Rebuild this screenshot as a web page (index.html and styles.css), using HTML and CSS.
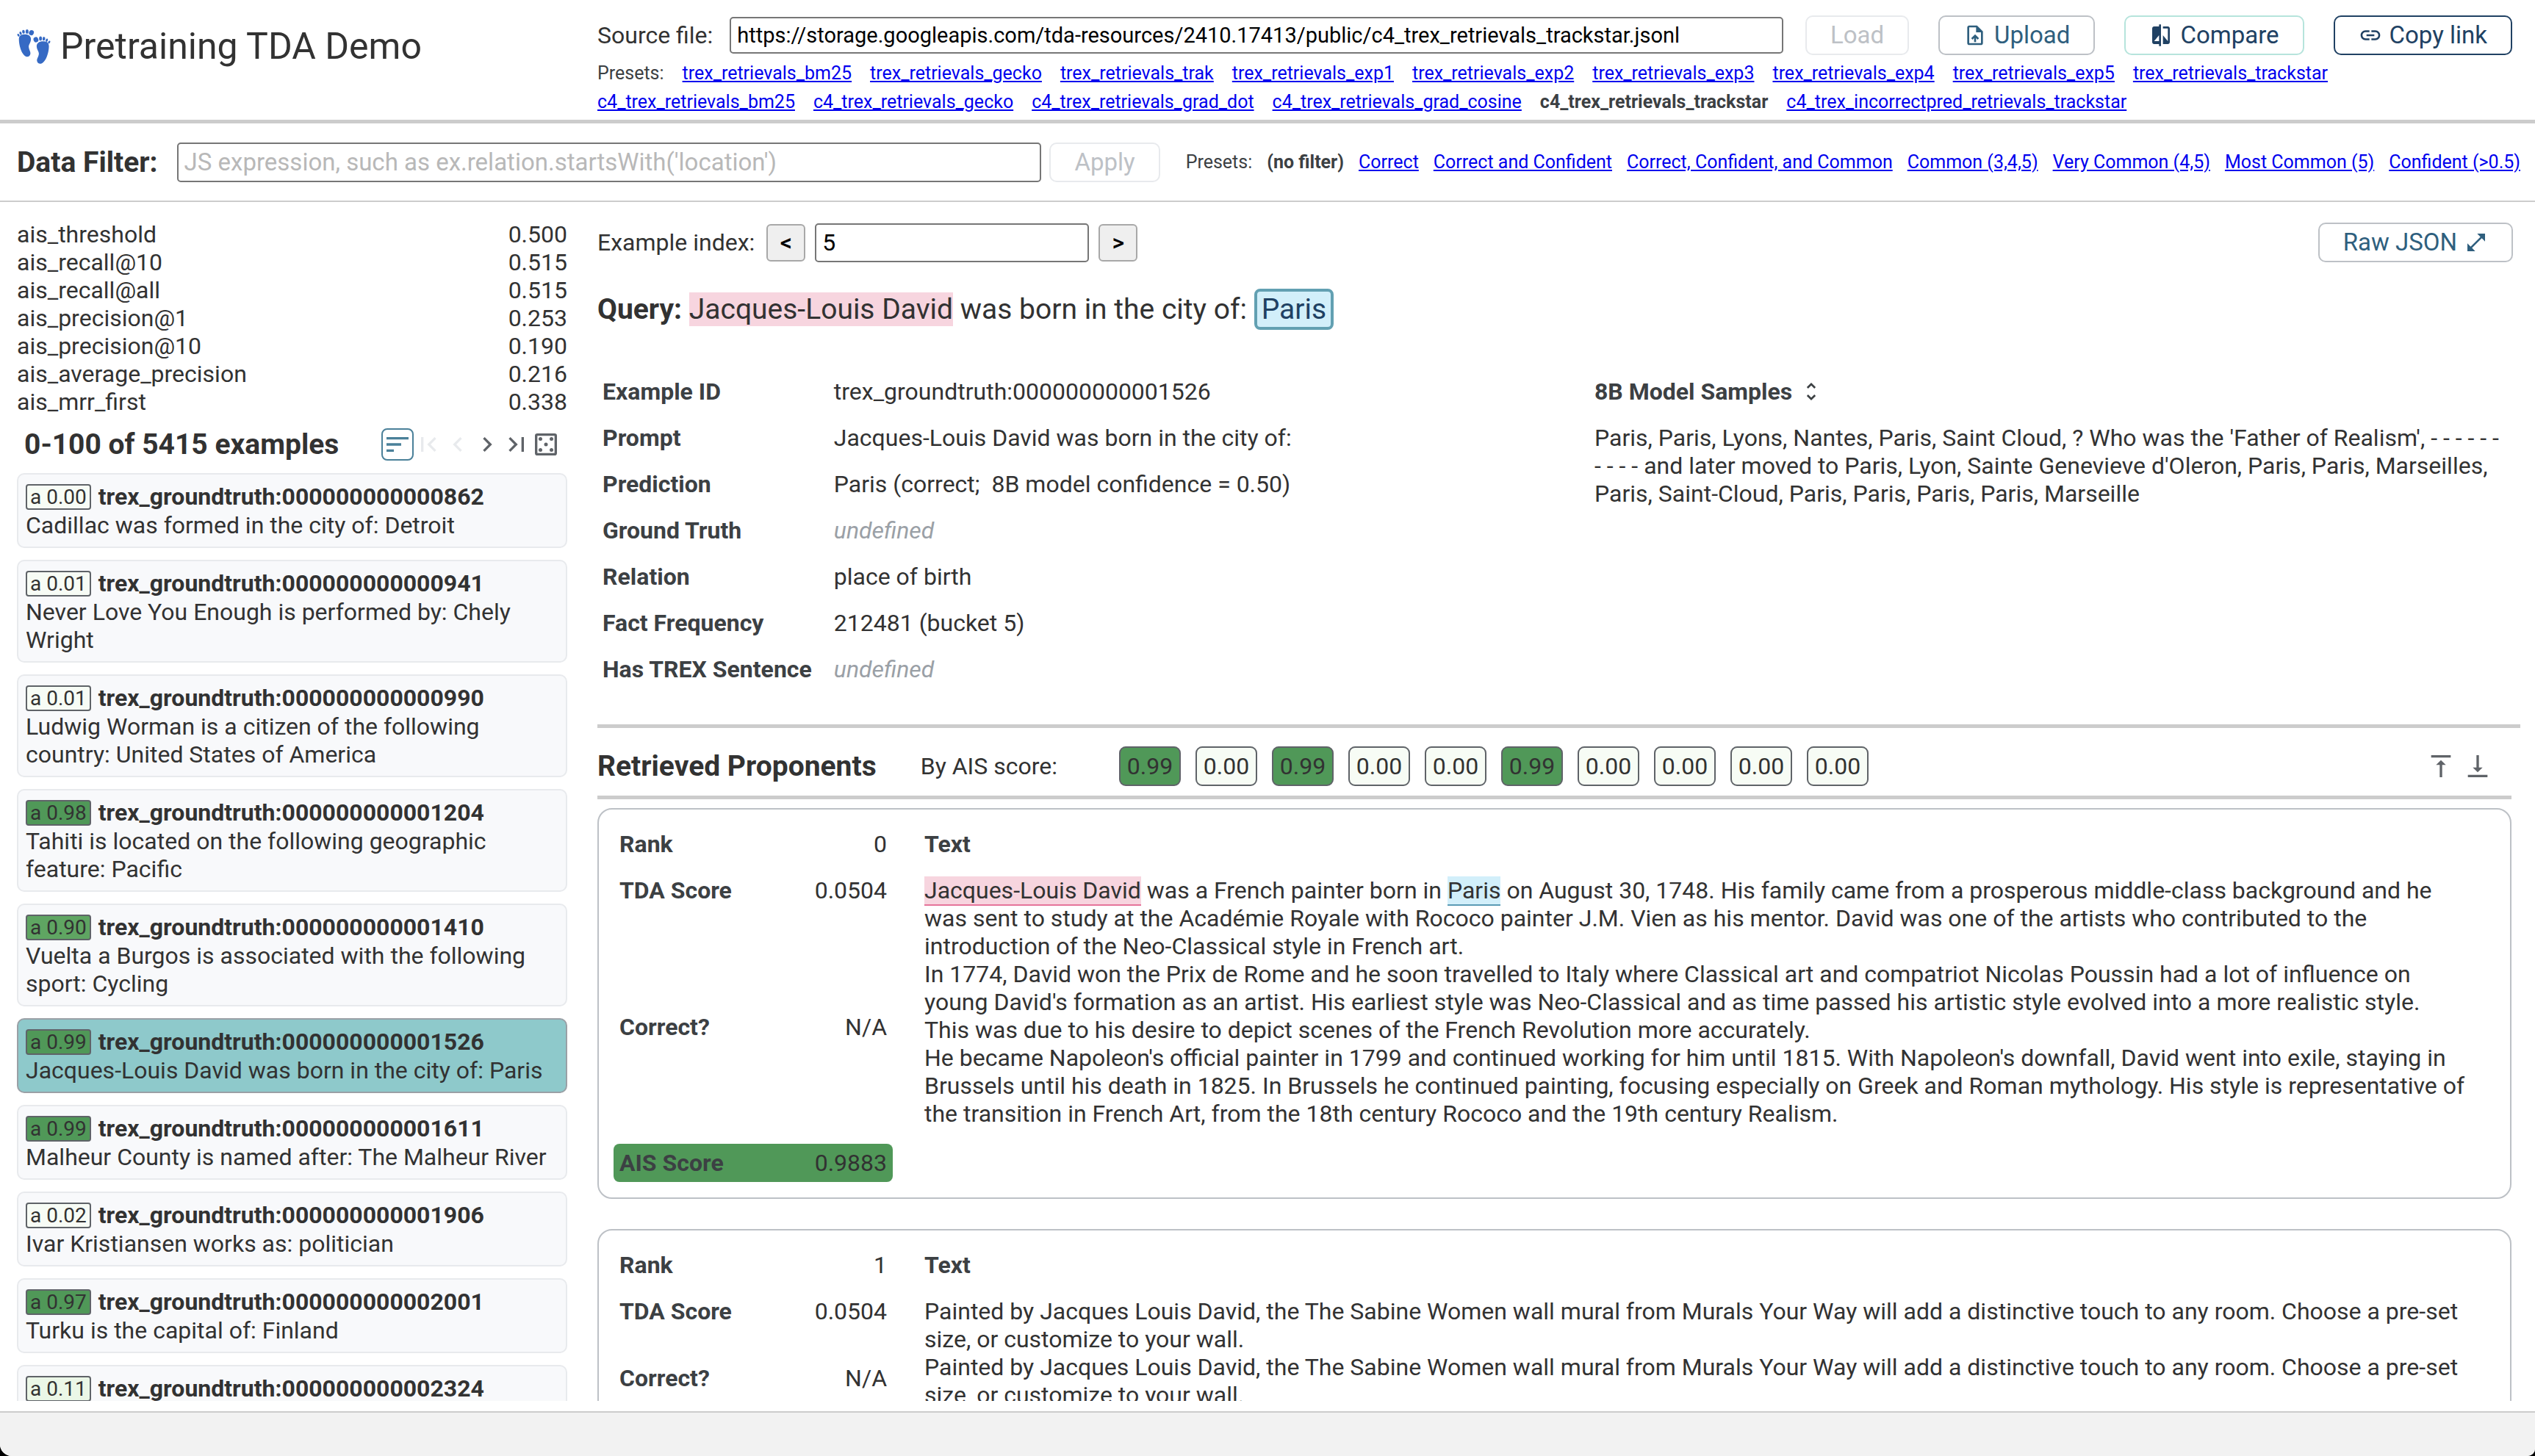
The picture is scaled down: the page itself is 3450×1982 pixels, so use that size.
FILE: index.html
```html
<!DOCTYPE html>
<html lang="en">
<head>
<meta charset="utf-8">
<title>Pretraining TDA Demo</title>
<link rel="stylesheet" href="styles.css">
</head>
<body>
<div class="app">
  <header class="header">
    <div class="brand">
      <svg class="brand-icon" viewBox="44 54 140 150" fill="#366ac4" aria-hidden="true">
        <path d="M52 98C52 84 61 78 76 78C94 78 103 86 102 100C101 114 92 120 93 131C94 141 101 150 100 158C99 167 92 172 84 171C66 168 52 128 52 98Z"/>
        <ellipse cx="104" cy="71" rx="10" ry="11" transform="rotate(25 104 71)"/>
        <ellipse cx="86" cy="66" rx="6" ry="9"/>
        <ellipse cx="71" cy="67" rx="5.500" ry="8" transform="rotate(-8 71 67)"/>
        <ellipse cx="59" cy="73" rx="4.500" ry="7" transform="rotate(-20 59 73)"/>
        <ellipse cx="50" cy="81" rx="4" ry="6" transform="rotate(-30 50 81)"/>
        <path d="M177 127C177 113 168 107 153 107C135 107 125 115 126 129C127 143 136 149 135 160C134 170 126 179 127 187C128 196 135 201 144 200C162 197 177 157 177 127Z"/>
        <ellipse cx="123" cy="100" rx="10" ry="11" transform="rotate(-25 123 100)"/>
        <ellipse cx="142" cy="95" rx="6" ry="9"/>
        <ellipse cx="156" cy="96" rx="5.500" ry="8" transform="rotate(8 156 96)"/>
        <ellipse cx="168" cy="102" rx="4.500" ry="7" transform="rotate(20 168 102)"/>
        <ellipse cx="178" cy="110" rx="4" ry="6" transform="rotate(30 178 110)"/>
      </svg>
      <h1 class="brand-title">Pretraining TDA Demo</h1>
    </div>
    <div class="source">
      <div class="source-row">
        <label class="source-label" for="source">Source file:</label>
        <input class="text-input source-input" id="source" type="text" value="https://storage.googleapis.com/tda-resources/2410.17413/public/c4_trex_retrievals_trackstar.jsonl">
        <div class="source-actions">
          <button class="btn" type="button" disabled>Load</button>
          <button class="btn" type="button"><svg class="icon" viewBox="0 0 24 24" aria-hidden="true"><path d="M14 2H6c-1.100 0-1.990.9-1.990 2L4 20c0 1.100.890 2 1.990 2H18c1.100 0 2-.9 2-2V8l-6-6zm4 18H6V4h7v5h5v11zM8 15.010l1.410 1.410L11 14.840V19h2v-4.160l1.590 1.590L16 15.010 12.010 11z"/></svg>Upload</button>
          <button class="btn btn-mint" type="button"><svg class="icon" viewBox="0 0 24 24" aria-hidden="true"><path d="M10 3H5c-1.100 0-2 .9-2 2v14c0 1.100.9 2 2 2h5v2h2V1h-2v2zm0 15H5l5-6v6zm9-15h-5v2h5v13l-5-6v9h5c1.100 0 2-.9 2-2V5c0-1.100-.9-2-2-2z"/></svg>Compare</button>
          <button class="btn btn-navy" type="button"><svg class="icon" viewBox="0 0 24 24" aria-hidden="true"><path d="M3.900 12c0-1.710 1.390-3.100 3.100-3.100h4V7H7c-2.760 0-5 2.240-5 5s2.240 5 5 5h4v-1.900H7c-1.710 0-3.100-1.390-3.100-3.100zM8 13h8v-2H8v2zm9-6h-4v1.900h4c1.710 0 3.100 1.390 3.100 3.100s-1.390 3.100-3.100 3.100h-4V17h4c2.760 0 5-2.240 5-5s-2.240-5-5-5z"/></svg>Copy link</button>
        </div>
      </div>
      <nav class="presets source-presets">
        <span>Presets:</span>
        <a href="#">trex_retrievals_bm25</a>
        <a href="#">trex_retrievals_gecko</a>
        <a href="#">trex_retrievals_trak</a>
        <a href="#">trex_retrievals_exp1</a>
        <a href="#">trex_retrievals_exp2</a>
        <a href="#">trex_retrievals_exp3</a>
        <a href="#">trex_retrievals_exp4</a>
        <a href="#">trex_retrievals_exp5</a>
        <a href="#">trex_retrievals_trackstar</a>
        <a href="#">c4_trex_retrievals_bm25</a>
        <a href="#">c4_trex_retrievals_gecko</a>
        <a href="#">c4_trex_retrievals_grad_dot</a>
        <a href="#">c4_trex_retrievals_grad_cosine</a>
        <b>c4_trex_retrievals_trackstar</b>
        <a href="#">c4_trex_incorrectpred_retrievals_trackstar</a>
      </nav>
    </div>
  </header>

  <div class="filter">
    <label class="filter-label" for="filter">Data Filter:</label>
    <input class="text-input filter-input" id="filter" type="text" placeholder="JS expression, such as ex.relation.startsWith('location')">
    <button class="btn filter-apply" type="button" disabled>Apply</button>
    <nav class="presets filter-presets">
      <span>Presets:</span>
      <b>(no filter)</b>
      <a href="#">Correct</a>
      <a href="#">Correct and Confident</a>
      <a href="#">Correct, Confident, and Common</a>
      <a href="#">Common (3,4,5)</a>
      <a href="#">Very Common (4,5)</a>
      <a href="#">Most Common (5)</a>
      <a href="#">Confident (&gt;0.5)</a>
    </nav>
  </div>

  <main class="main">
    <aside class="sidebar">
      <table class="metrics">
        <tr><th scope="row">ais_threshold</th><td>0.500</td></tr>
        <tr><th scope="row">ais_recall@10</th><td>0.515</td></tr>
        <tr><th scope="row">ais_recall@all</th><td>0.515</td></tr>
        <tr><th scope="row">ais_precision@1</th><td>0.253</td></tr>
        <tr><th scope="row">ais_precision@10</th><td>0.190</td></tr>
        <tr><th scope="row">ais_average_precision</th><td>0.216</td></tr>
        <tr><th scope="row">ais_mrr_first</th><td>0.338</td></tr>
      </table>
      <div class="list-head">
        <h2 class="list-title">0-100 of 5415 examples</h2>
        <div class="pager">
          <button class="icon-btn icon-btn-on" type="button" aria-label="Sort"><svg viewBox="0 0 24 24"><path d="M3 18h6v-2H3v2zM3 6v2h18V6H3zm0 7h12v-2H3v2z"/></svg></button>
          <button class="icon-btn" type="button" aria-label="First page" disabled><svg viewBox="0 0 24 24"><path d="M18.410 16.590L13.820 12l4.590-4.590L17 6l-6 6 6 6zM6 6h2v12H6z"/></svg></button>
          <button class="icon-btn" type="button" aria-label="Previous page" disabled><svg viewBox="0 0 24 24"><path d="M15.410 7.410L14 6l-6 6 6 6 1.410-1.410L10.830 12z"/></svg></button>
          <button class="icon-btn" type="button" aria-label="Next page"><svg viewBox="0 0 24 24"><path d="M10 6L8.590 7.410 13.170 12l-4.580 4.590L10 18l6-6z"/></svg></button>
          <button class="icon-btn" type="button" aria-label="Last page"><svg viewBox="0 0 24 24"><path d="M5.590 7.410L10.180 12l-4.590 4.590L7 18l6-6-6-6zM16 6h2v12h-2z"/></svg></button>
          <button class="icon-btn" type="button" aria-label="Random example"><svg viewBox="0 0 24 24"><path fill-rule="evenodd" d="M5 3h14a2 2 0 0 1 2 2v14a2 2 0 0 1-2 2H5a2 2 0 0 1-2-2V5a2 2 0 0 1 2-2zm0 2v14h14V5z"/><circle cx="7.500" cy="7.500" r="1.500"/><circle cx="16.500" cy="7.500" r="1.500"/><circle cx="12" cy="12" r="1.500"/><circle cx="7.500" cy="16.500" r="1.500"/><circle cx="16.500" cy="16.500" r="1.500"/></svg></button>
        </div>
      </div>
      <ul class="examples">
        <li class="example"><div class="example-head"><span class="score score-low">a 0.00</span><b>trex_groundtruth:000000000000862</b></div>Cadillac was formed in the city of: Detroit</li>
        <li class="example"><div class="example-head"><span class="score score-low">a 0.01</span><b>trex_groundtruth:000000000000941</b></div>Never Love You Enough is performed by: Chely Wright</li>
        <li class="example"><div class="example-head"><span class="score score-low">a 0.01</span><b>trex_groundtruth:000000000000990</b></div>Ludwig Worman is a citizen of the following country: United States of America</li>
        <li class="example"><div class="example-head"><span class="score score-high">a 0.98</span><b>trex_groundtruth:000000000001204</b></div>Tahiti is located on the following geographic feature: Pacific</li>
        <li class="example"><div class="example-head"><span class="score score-good">a 0.90</span><b>trex_groundtruth:000000000001410</b></div>Vuelta a Burgos is associated with the following sport: Cycling</li>
        <li class="example example-on"><div class="example-head"><span class="score score-high">a 0.99</span><b>trex_groundtruth:000000000001526</b></div>Jacques-Louis David was born in the city of: Paris</li>
        <li class="example"><div class="example-head"><span class="score score-high">a 0.99</span><b>trex_groundtruth:000000000001611</b></div>Malheur County is named after: The Malheur River</li>
        <li class="example"><div class="example-head"><span class="score score-low">a 0.02</span><b>trex_groundtruth:000000000001906</b></div>Ivar Kristiansen works as: politician</li>
        <li class="example"><div class="example-head"><span class="score score-high">a 0.97</span><b>trex_groundtruth:000000000002001</b></div>Turku is the capital of: Finland</li>
        <li class="example example-last"><div class="example-head"><span class="score score-faint">a 0.11</span><b>trex_groundtruth:000000000002324</b></div></li>
      </ul>
    </aside>

    <section class="detail">
      <div class="index-row">
        <label class="index-label" for="index">Example index:</label>
        <button class="step" type="button">&lt;</button>
        <input class="text-input index-input" id="index" type="text" value="5">
        <button class="step" type="button">&gt;</button>
        <button class="btn raw" type="button">Raw JSON<svg class="icon" viewBox="0 0 24 24" aria-hidden="true"><path d="M21 11V3h-8l3.290 3.290-10 10L3 13v8h8l-3.290-3.290 10-10z"/></svg></button>
      </div>
      <p class="query"><b>Query:</b> <span class="subject">Jacques-Louis David</span> was born in the city of: <span class="answer">Paris</span></p>
      <div class="info">
        <table class="fields">
          <tr><th scope="row">Example ID</th><td>trex_groundtruth:000000000001526</td></tr>
          <tr><th scope="row">Prompt</th><td>Jacques-Louis David was born in the city of:</td></tr>
          <tr><th scope="row">Prediction</th><td>Paris (correct;&nbsp; 8B model confidence = 0.50)</td></tr>
          <tr><th scope="row">Ground Truth</th><td><i>undefined</i></td></tr>
          <tr><th scope="row">Relation</th><td>place of birth</td></tr>
          <tr><th scope="row">Fact Frequency</th><td>212481 (bucket 5)</td></tr>
          <tr><th scope="row">Has TREX Sentence</th><td><i>undefined</i></td></tr>
        </table>
        <div class="samples">
          <h3 class="samples-title">8B Model Samples<svg class="icon" viewBox="0 0 24 24" aria-hidden="true"><path d="M12 5.830L15.170 9l1.410-1.410L12 3 7.410 7.590 8.830 9 12 5.830zm0 12.340L8.830 15l-1.410 1.410L12 21l4.590-4.590L15.170 15 12 18.170z"/></svg></h3>
          <p class="samples-text">Paris, Paris, Lyons, Nantes, Paris, Saint Cloud, ? Who was the 'Father of Realism', - - - - - -<br>- - - - and later moved to Paris, Lyon, Sainte Genevieve d'Oleron, Paris, Paris, Marseilles, Paris, Saint-Cloud, Paris, Paris, Paris, Paris, Marseille</p>
        </div>
      </div>
      <div class="proponents">
        <div class="prop-head">
          <h2 class="prop-title">Retrieved Proponents</h2>
          <span class="prop-by">By AIS score:</span>
          <div class="chips">
            <button class="chip score-high" type="button">0.99</button>
            <button class="chip score-low" type="button">0.00</button>
            <button class="chip score-high" type="button">0.99</button>
            <button class="chip score-low" type="button">0.00</button>
            <button class="chip score-low" type="button">0.00</button>
            <button class="chip score-high" type="button">0.99</button>
            <button class="chip score-low" type="button">0.00</button>
            <button class="chip score-low" type="button">0.00</button>
            <button class="chip score-low" type="button">0.00</button>
            <button class="chip score-low" type="button">0.00</button>
          </div>
          <div class="prop-tools">
            <button class="icon-btn" type="button" aria-label="Scroll to top"><svg viewBox="0 0 24 24"><path d="M8 11h3v10h2V11h3l-4-4-4 4zM4 3v2h16V3H4z"/></svg></button>
            <button class="icon-btn" type="button" aria-label="Scroll to bottom"><svg viewBox="0 0 24 24"><path d="M16 13h-3V3h-2v10H8l4 4 4-4zM4 19v2h16v-2H4z"/></svg></button>
          </div>
        </div>
        <article class="card">
          <table class="prop">
            <tr><th class="key" scope="row">Rank</th><td class="val">0</td><th class="text-head" scope="col">Text</th></tr>
            <tr><th class="key" scope="row">TDA Score</th><td class="val">0.0504</td><td class="text" rowspan="2"><span class="hit-subject">Jacques-Louis David</span> was a French painter born in <span class="hit-answer">Paris</span> on August 30, 1748. His family came from a prosperous middle-class background and he was sent to study at the Académie Royale with Rococo painter J.M. Vien as his mentor. David was one of the artists who contributed to the<br>introduction of the Neo-Classical style in French art.<br>In 1774, David won the Prix de Rome and he soon travelled to Italy where Classical art and compatriot Nicolas Poussin had a lot of influence on<br>young David's formation as an artist. His earliest style was Neo-Classical and as time passed his artistic style evolved into a more realistic style.<br>This was due to his desire to depict scenes of the French Revolution more accurately.<br>He became Napoleon's official painter in 1799 and continued working for him until 1815. With Napoleon's downfall, David went into exile, staying in Brussels until his death in 1825. In Brussels he continued painting, focusing especially on Greek and Roman mythology. His style is representative of the transition in French Art, from the 18th century Rococo and the 19th century Realism.</td></tr>
            <tr><th class="key" scope="row">Correct?</th><td class="val">N/A</td></tr>
            <tr class="ais"><th class="key" scope="row">AIS Score</th><td class="val">0.9883</td></tr>
          </table>
        </article>
        <article class="card">
          <table class="prop">
            <tr><th class="key" scope="row">Rank</th><td class="val">1</td><th class="text-head" scope="col">Text</th></tr>
            <tr><th class="key" scope="row">TDA Score</th><td class="val">0.0504</td><td class="text" rowspan="2">Painted by Jacques Louis David, the The Sabine Women wall mural from Murals Your Way will add a distinctive touch to any room. Choose a pre-set size, or customize to your wall.<br>Painted by Jacques Louis David, the The Sabine Women wall mural from Murals Your Way will add a distinctive touch to any room. Choose a pre-set size, or customize to your wall.</td></tr>
            <tr><th class="key" scope="row">Correct?</th><td class="val">N/A</td></tr>
          </table>
        </article>
      </div>
    </section>
  </main>
  <footer class="footer"></footer>
</div>
</body>
</html>
```
FILE: styles.css
```css
* { box-sizing: border-box; }

html { background: #000; }

body {
  margin: 0;
  color: #323232;
  font-family: Roboto, "Liberation Sans", sans-serif;
  font-size: 32px;
  line-height: 38px;
}

h1, h2, h3, p, ul { margin: 0; padding: 0; }
button, input { font: inherit; }
table { border-spacing: 0; }
th { text-align: left; }
td, th { padding: 0; }

.app {
  display: flex;
  flex-direction: column;
  height: 100vh;
  overflow: hidden;
  background: #fff;
  border-radius: 0 0 10px 16px;
}

/* Header */
.header {
  display: grid;
  grid-template-columns: 766px 1fr;
  column-gap: 24px;
  padding: 21px 31px 5px 23px;
  border-bottom: 5px solid #ccc;
}
.brand {
  display: flex;
  align-items: center;
  gap: 13px;
  height: 84px;
}
.brand-icon { width: 46px; height: 49px; }
.brand-title { font-size: 50px; line-height: 56px; font-weight: 400; }
.source-row { display: flex; align-items: center; }
.source-label { margin-right: 23px; }
.source-actions { display: flex; gap: 40px; margin-left: 30px; }
.source-input { flex: 1; min-width: 0; height: 50px; }

.text-input {
  padding: 0 8px;
  border: 2px solid #767676;
  border-radius: 5px;
  background: #fff;
  color: #000;
}
.text-input::placeholder { color: #b8b8b8; opacity: 1; }
.source-input { font-size: 29px; }
.filter-input { font-size: 33px; }

.btn {
  display: inline-flex;
  align-items: center;
  justify-content: center;
  gap: 10px;
  height: 54px;
  padding: 0 32px;
  border: 2px solid #bdc1c6;
  border-radius: 10px;
  background: #fff;
  color: #2f5f7e;
  font-size: 33px;
  white-space: nowrap;
}
.btn:disabled { border-color: #e8eaed; color: #bdc1c6; }
.btn-mint { border-color: #b6e4dc; color: #204163; }
.btn-navy { border-color: #204163; color: #204163; }
.icon { width: 32px; height: 32px; fill: currentColor; flex: none; }

.presets { display: flex; font-size: 25px; color: #3c4043; white-space: nowrap; }
.presets a { color: #0000ee; text-decoration: underline; }
.source-presets { flex-wrap: wrap; gap: 1px 25px; margin-top: 6px; }

/* Filter bar */
.filter {
  display: flex;
  align-items: center;
  height: 107px;
  padding: 0 20px 0 23px;
  border-bottom: 2px solid #ccc;
}
.filter-label { margin-right: 26px; font-size: 39px; font-weight: 700; }
.filter-input { flex: 1; min-width: 0; height: 54px; }
.filter-apply { margin-left: 11px; }
.filter-presets { gap: 20px; margin-left: 35px; }

/* Main area */
.main {
  flex: 1;
  min-height: 0;
  display: grid;
  grid-template-columns: 749px minmax(0, 1fr);
  grid-template-rows: minmax(0, 1fr);
  column-gap: 41px;
  padding: 25px 20px 14px 23px;
}
.sidebar, .detail { display: flex; flex-direction: column; min-height: 0; overflow: hidden; }
.sidebar > *, .detail > * { flex: none; }

.metrics { width: 100%; }
.metrics th { font-weight: 400; }
.metrics td { text-align: right; }

.list-head {
  display: flex;
  align-items: center;
  justify-content: space-between;
  height: 78px;
  padding: 0 9px 0 10px;
}
.list-title { font-size: 39px; line-height: 44px; font-weight: 700; }
.pager { display: flex; align-items: center; }
.icon-btn {
  display: block;
  width: 40px;
  height: 40px;
  padding: 0;
  border: 0;
  background: none;
  color: #5f6368;
}
.icon-btn svg { display: block; width: 40px; height: 40px; fill: currentColor; }
.icon-btn:disabled { color: #e8eaed; }
.icon-btn-on {
  width: 44px;
  height: 44px;
  border: 2px solid #4a8099;
  border-radius: 8px;
  color: #4a8099;
}

.examples { display: flex; flex-direction: column; gap: 16px; list-style: none; }
.example {
  flex: none;
  padding: 10px;
  border: 2px solid #e8eaed;
  border-radius: 10px;
  background: #f8f9fb;
}
.example-last { min-height: 102px; }
.example-on { border-color: #9aa0a6; background: #8ec9cb; }
.example-head { display: flex; align-items: center; gap: 10px; height: 40px; }
.score {
  height: 35px;
  padding: 0 4px;
  border: 2px solid #5f6368;
  border-radius: 4px;
  font-size: 28px;
  line-height: 31px;
}
.score-low { background: #f7fcf5; }
.score-faint { background: #ebf7e7; }
.score-good { background: #5fa562; }
.score-high { background: #509858; }

/* Detail pane */
.index-row { display: flex; align-items: center; gap: 13px; padding: 3px 10px 0 0; }
.index-label { margin-right: 3px; }
.step {
  width: 53px;
  height: 51px;
  padding: 0;
  border: 2px solid #a8a8a8;
  border-radius: 6px;
  background: #efefef;
  color: #000;
  font-weight: 500;
}
.index-input { width: 373px; height: 53px; }
.raw { margin-left: auto; }

.query { margin-top: 36px; font-size: 39px; line-height: 56px; }
.subject { background: #f7d5df; }
.answer {
  display: inline-block;
  padding: 0 6px;
  border: 4px solid #62a0b2;
  border-radius: 8px;
  background: #d2effa;
  color: #204163;
  line-height: 48px;
}

.info {
  display: grid;
  grid-template-columns: 1fr 1260px;
  margin-top: 52px;
  padding: 0 0 44px 7px;
}
.fields { justify-self: start; }
.fields th, .samples-title { color: #3c4043; font-size: 32px; font-weight: 700; }
.fields td, .fields th { height: 63px; }
.fields td { padding-left: 30px; }
.fields i { color: #9aa0a6; }
.samples-title { display: flex; align-items: center; gap: 10px; height: 63px; line-height: 38px; }
.samples-text { padding: 13px 6px 0 0; }

.proponents { border-top: 5px solid #ccc; }
.prop-head {
  display: flex;
  align-items: center;
  height: 97px;
  margin-right: 12px;
  padding: 12px 26px 0 0;
  border-bottom: 5px solid #ccc;
}
.prop-title { font-size: 39px; font-weight: 700; }
.prop-by { margin-left: 60px; }
.chips { display: flex; gap: 20px; margin-left: 84px; }
.chip {
  width: 84px;
  height: 54px;
  padding: 0;
  border: 2px solid #5f6368;
  border-radius: 9px;
  color: #323232;
}
.prop-tools { display: flex; gap: 10px; margin-left: auto; }

/* Proponent cards: the "Correct?" row takes up the height of a long text */
.card {
  margin: 12px 12px 41px 0;
  padding: 21px 20px;
  border: 2px solid #bdc1c6;
  border-radius: 20px;
}
.prop {
  display: grid;
  grid-template-columns: 200px 180px 1fr;
  grid-template-rows: 52px 52px auto;
  grid-auto-rows: 52px;
  row-gap: 11px;
  color: #3c4043;
}
.prop tbody, .prop tr { display: contents; }
.key, .val, .text-head { display: flex; align-items: center; }
.key { padding-left: 8px; }
.val { justify-content: flex-end; padding-right: 8px; color: #323232; }
.text-head { padding-left: 43px; }
.text {
  display: block;
  grid-row: span 2;
  padding: 7px 28px 11px 43px;
  color: #323232;
}
.hit-subject { background: #f7d5df; box-shadow: 0 2px #e5749a; }
.hit-answer { background: #d2effa; box-shadow: 0 2px #5a9bb5; }
.ais .key { background: #509858; border-radius: 8px 0 0 8px; }
.ais .val { background: #509858; border-radius: 0 8px 8px 0; }

.footer { height: 61px; border-top: 2px solid #ccc; background: #f2f2f2; }
```
